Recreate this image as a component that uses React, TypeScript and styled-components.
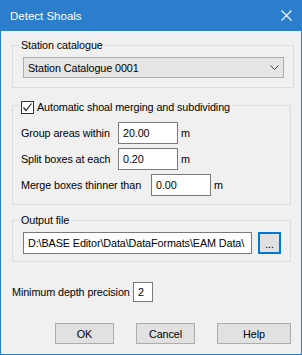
import styled, { createGlobalStyle } from 'styled-components';

const GlobalStyle = createGlobalStyle`
  html, body {
    margin: 0;
    padding: 0;
    background: #ffffff;
  }
  body {
    font-family: 'Liberation Sans', Arial, sans-serif;
    font-size: 10.8px;
    letter-spacing: -0.1px;
    color: #000;
  }
  * {
    box-sizing: border-box;
  }
`;

const Window = styled.div`
  width: 302px;
  height: 355px;
  border: 1px solid #2b7ecb;
  border-top: none;
  background: #f0f0f0;
  display: flex;
  flex-direction: column;
`;

const TitleBar = styled.div`
  height: 31px;
  margin: 0 -1px;
  padding: 0 10px 0 10px;
  background: #2b7ecb;
  color: #fff;
  display: flex;
  align-items: center;
  justify-content: space-between;
  font-size: 11.5px;
  letter-spacing: 0;
`;

const Content = styled.div`
  padding: 14px 0 0 11px;
  display: flex;
  flex-direction: column;
`;

const Group = styled.div<{ $width: number; $top: number; $pad: string }>`
  position: relative;
  width: ${(p) => p.$width}px;
  margin-top: ${(p) => p.$top}px;
  padding: ${(p) => p.$pad};
  border: 1px solid #dcdcdc;
  display: flex;
  flex-direction: column;
  gap: 4px;
`;

const Legend = styled.div<{ $top: number }>`
  position: absolute;
  top: ${(p) => p.$top}px;
  left: 6px;
  padding: 0 2px;
  height: 15px;
  line-height: 15px;
  background: #f0f0f0;
  display: flex;
  align-items: center;
  gap: 3px;
`;

const CheckBox = styled.span`
  width: 13px;
  height: 13px;
  border: 1px solid #333;
  background: #fff;
  display: flex;
  align-items: center;
  justify-content: center;
`;

const Combo = styled.div`
  width: 261px;
  height: 21px;
  padding: 0 4px;
  border: 1px solid #adadad;
  background: #e5e5e5;
  display: flex;
  align-items: center;
  justify-content: space-between;
`;

const Row = styled.div`
  height: 22px;
  display: flex;
  align-items: center;
`;

const Label = styled.span<{ $width: number }>`
  width: ${(p) => p.$width}px;
  white-space: nowrap;
`;

const TextBox = styled.div<{ $width: number; $height?: number }>`
  width: ${(p) => p.$width}px;
  height: ${(p) => p.$height ?? 22}px;
  padding: 0 4px;
  border: 1px solid #7a7a7a;
  background: #fff;
  display: flex;
  align-items: center;
  white-space: nowrap;
  overflow: hidden;
`;

const Unit = styled.span`
  margin-left: 3px;
`;

const BrowseButton = styled.div`
  width: 23px;
  height: 22px;
  margin-left: 6px;
  border: 2px solid #0078d7;
  background: #e1e1e1;
  display: flex;
  align-items: flex-end;
  justify-content: center;
  padding-bottom: 2px;
  line-height: 12px;
`;

const PrecisionRow = styled.div`
  margin-top: 20px;
  height: 20px;
  display: flex;
  align-items: center;
`;

const ButtonRow = styled.div`
  margin-top: 21px;
  padding-right: 10px;
  display: flex;
  justify-content: flex-end;
  gap: 22px;
`;

const Button = styled.div<{ $width: number }>`
  width: ${(p) => p.$width}px;
  height: 21px;
  border: 1px solid #adadad;
  background: #e1e1e1;
  display: flex;
  align-items: center;
  justify-content: center;
`;

function CloseIcon() {
  return (
    <svg width="11" height="11" viewBox="0 0 11 11">
      <path d="M0.5 0.5 L10.5 10.5 M10.5 0.5 L0.5 10.5" stroke="#fff" strokeWidth="1.1" />
    </svg>
  );
}

function Chevron() {
  return (
    <svg width="9" height="5" viewBox="0 0 9 5">
      <path d="M0.5 0.5 L4.5 4.5 L8.5 0.5" stroke="#444" strokeWidth="1" fill="none" />
    </svg>
  );
}

function Tick() {
  return (
    <svg width="11" height="11" viewBox="0 0 11 11">
      <path d="M1.5 5.5 L4 8.5 L9.5 1.5" stroke="#222" strokeWidth="1.2" fill="none" />
    </svg>
  );
}

export default function App() {
  return (
    <>
      <GlobalStyle />
      <Window>
        <TitleBar>
          <span>Detect Shoals</span>
          <CloseIcon />
        </TitleBar>
        <Content>
          <Group $width={282} $top={0} $pad="11px 0 9px 10px">
            <Legend $top={-8}>Station catalogue</Legend>
            <Combo>
              <span>Station Catalogue 0001</span>
              <Chevron />
            </Combo>
          </Group>

          <Group $width={279} $top={17} $pad="16px 0 8px 8px">
            <Legend $top={-6}>
              <CheckBox>
                <Tick />
              </CheckBox>
              Automatic shoal merging and subdividing
            </Legend>
            <Row>
              <Label $width={97}>Group areas within</Label>
              <TextBox $width={60}>20.00</TextBox>
              <Unit>m</Unit>
            </Row>
            <Row>
              <Label $width={97}>Split boxes at each</Label>
              <TextBox $width={60}>0.20</TextBox>
              <Unit>m</Unit>
            </Row>
            <Row>
              <Label $width={130}>Merge boxes thinner than</Label>
              <TextBox $width={60}>0.00</TextBox>
              <Unit>m</Unit>
            </Row>
          </Group>

          <Group $width={279} $top={15} $pad="11px 0 7px 10px">
            <Legend $top={-8}>Output file</Legend>
            <Row>
              <TextBox $width={229}>D:\BASE Editor\Data\DataFormats\EAM Data\</TextBox>
              <BrowseButton>...</BrowseButton>
            </Row>
          </Group>

          <PrecisionRow>
            <Label $width={121}>Minimum depth precision</Label>
            <TextBox $width={20} $height={20}>2</TextBox>
          </PrecisionRow>
        </Content>
        <ButtonRow>
          <Button $width={59}>OK</Button>
          <Button $width={59}>Cancel</Button>
          <Button $width={74}>Help</Button>
        </ButtonRow>
      </Window>
    </>
  );
}
